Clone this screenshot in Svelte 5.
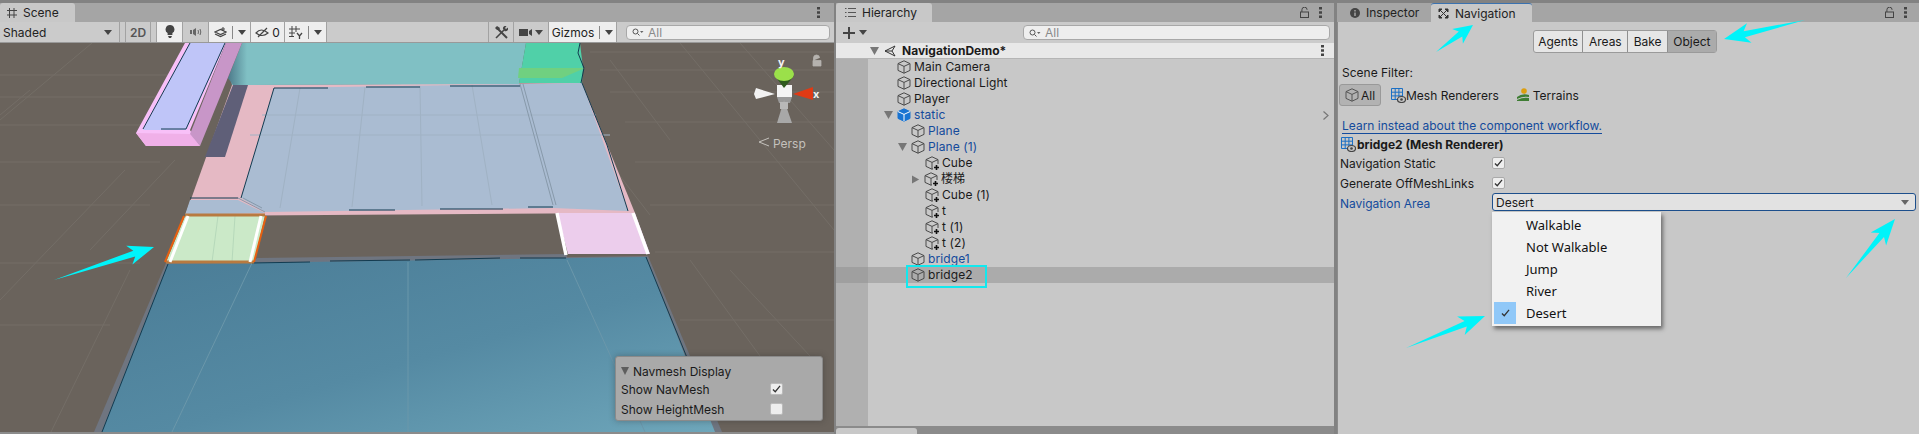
<script>
  // hierarchy rows, depth 0 starts right of the grey gutter
  const rows = [
    { name: "Main Camera", depth: 0 },
    { name: "Directional Light", depth: 0 },
    { name: "Player", depth: 0 },
    { name: "static", depth: 0, blue: true, open: true, solid: true, more: true },
    { name: "Plane", depth: 1, blue: true },
    { name: "Plane (1)", depth: 1, blue: true, open: true },
    { name: "Cube", depth: 2, prefab: true },
    { name: "楼梯", depth: 2, prefab: true, closed: true },
    { name: "Cube (1)", depth: 2, prefab: true },
    { name: "t", depth: 2, prefab: true },
    { name: "t (1)", depth: 2, prefab: true },
    { name: "t (2)", depth: 2, prefab: true },
    { name: "bridge1", depth: 1, blue: true },
    { name: "bridge2", depth: 1, selected: true }
  ];
  const menu = ["Walkable", "Not Walkable", "Jump", "River", "Desert"];
  const tabs = ["Agents", "Areas", "Bake", "Object"];

  function dart(x1, y1, x2, y2) {
    const dx = x2 - x1, dy = y2 - y1;
    const len = Math.hypot(dx, dy);
    const ux = dx / len, uy = dy / len;
    const px = -uy, py = ux;
    const head = Math.min(26, len * 0.42);
    const nx = x2 - ux * head * 0.8, ny = y2 - uy * head * 0.8;
    const bx = x2 - ux * head, by = y2 - uy * head;
    const w = Math.min(10, len * 0.2);
    const p = [
      [x1, y1],
      [nx + px * 3, ny + py * 3],
      [bx + px * w, by + py * w],
      [x2, y2],
      [bx - px * w, by - py * w],
      [nx - px * 3, ny - py * 3]
    ];
    return p.map((q) => q[0].toFixed(1) + "," + q[1].toFixed(1)).join(" ");
  }
  const arrows = [
    dart(54, 280, 154, 247),
    dart(1436, 52, 1473, 25),
    dart(1805, 20, 1724, 39),
    dart(1846, 278, 1895, 219),
    dart(1406, 348, 1485, 316)
  ];
</script>

{#snippet cube(color = "#4a4a4a", fill = "none")}
  <svg class="cube" viewBox="0 0 14 14" width="14" height="14">
    <path d="M7 .8 13 3.6V10.4L7 13.2 1 10.4V3.6Z" {fill} stroke={color} stroke-width="1" />
    <path d="M1 3.6 7 6.4 13 3.6M7 6.4V13.2" fill="none" stroke={fill === "none" ? color : "#fff"} stroke-width="1" />
  </svg>
{/snippet}

{#snippet prefab()}
  <svg class="cube pf" viewBox="0 0 15 15" width="15" height="15">
    <path d="M7 .8 13 3.6V10.4L7 13.2 1 10.4V3.6Z" fill="none" stroke="#4a4a4a" />
    <path d="M1 3.6 7 6.4 13 3.6M7 6.4V13.2" fill="none" stroke="#4a4a4a" />
    <rect x="8" y="8" width="7" height="7" fill="#c8c8c8" />
    <path d="M11.5 9v5M9 11.5h5" stroke="#111" stroke-width="1.6" />
  </svg>
{/snippet}

{#snippet meshIcon()}
  <svg viewBox="0 0 15 15" width="15" height="15">
    <path d="M.5.5h11v11H.5ZM4.2.5v11M7.9.5v11M.5 4.2h11M.5 7.9h11" fill="none" stroke="#1a6fc4" />
    <ellipse cx="10.5" cy="11.5" rx="4" ry="3" fill="#c8c8c8" stroke="#444" stroke-width="1.2" />
    <circle cx="10.5" cy="11.5" r="1.3" fill="#444" />
  </svg>
{/snippet}

{#snippet search()}
  <div class="search">
    <svg viewBox="0 0 12 8" width="12" height="8"><circle cx="3.5" cy="3.5" r="2.5" fill="none" stroke="#555" /><path d="M5.5 5.5 7.5 7.5" stroke="#555" /><path d="M8 3h3.5L9.7 5Z" fill="#666" /></svg>
    <span>All</span>
  </div>
{/snippet}

{#snippet caret()}
  <svg class="caret" viewBox="0 0 8 5" width="8" height="5"><path d="M0 0h8L4 5Z" /></svg>
{/snippet}

{#snippet dots()}
  <svg viewBox="0 0 3 11" width="3" height="11"><path d="M0 0h3v2.4H0ZM0 4.3h3v2.4H0ZM0 8.6h3V11H0Z" fill="#444" /></svg>
{/snippet}

{#snippet lock()}
  <svg viewBox="0 0 9 11" width="9" height="11"><path d="M1.9 5V2.8a2.6 2.6 0 0 1 5.2 0" fill="none" stroke="#444" /><rect x=".5" y="5" width="8" height="5.5" fill="none" stroke="#444" /></svg>
{/snippet}

{#snippet tick()}
  <svg viewBox="0 0 10 9" width="9" height="8"><path d="M1 5 3.6 7.6 9 1" fill="none" stroke="#333" stroke-width="1.4" /></svg>
{/snippet}

<div class="editor">
  <section class="panel scene">
    <div class="tabbar">
      <div class="tab scene-tab">
        <svg viewBox="0 0 10 10" width="10" height="10"><path d="M2.5 0v10M7 0v10M0 2.5h10M0 7h10" stroke="#444" /></svg>
        <span>Scene</span>
      </div>
      <div class="grow"></div>
      <div class="tab-menu">{@render dots()}</div>
    </div>
    <div class="toolbar">
      <div class="tool shaded"><span>Shaded</span>{@render caret()}</div>
      <div class="tool blank"></div>
      <div class="tool two-d">2D</div>
      <div class="tool blank"></div>
      <div class="tool on w25">
        <svg viewBox="0 0 10 14" width="10" height="14"><path d="M5 0a4.4 4.4 0 0 0-2.4 8.1V10h4.8V8.1A4.4 4.4 0 0 0 5 0ZM3 11h4L6 13H4Z" fill="#444" /></svg>
      </div>
      <div class="tool w25">
        <svg viewBox="0 0 12 10" width="12" height="10"><path d="M0 3h2v4H0ZM3 3 6 1v8L3 7Z" fill="#666" /><path d="M8 3q1 2 0 4M10 2q1.6 3 0 6" fill="none" stroke="#666" /></svg>
      </div>
      <div class="tool on w42">
        <svg viewBox="0 0 13 11" width="13" height="11"><path d="M1 7 6.500 9.500 12 7M1 5l5.500 2.500L12 5 6.500 2.500Z" fill="none" stroke="#444" stroke-width="1.2" /><path d="M9 0v4M7 2h4" stroke="#444" /></svg>
        <i class="sep"></i>{@render caret()}
      </div>
      <div class="tool on w34">
        <svg viewBox="0 0 14 11" width="14" height="11"><path d="M1 6q5-6 12 0-6 5-12 0ZM3 10 12 1" fill="none" stroke="#444" stroke-width="1.2" /></svg>
        <span>0</span>
      </div>
      <div class="tool on w42">
        <svg viewBox="0 0 14 13" width="14" height="13"><path d="M3 0v11M7 0v6M0 3h11M0 7h6M0 10.500h5" stroke="#444" fill="none" /><path d="M8 7l2.500 3L13 7M10.500 10v3" stroke="#444" stroke-width="1.300" fill="none" /></svg>
        <i class="sep"></i>{@render caret()}
      </div>
      <div class="grow"></div>
      <div class="tool w25 tools-btn">
        <svg viewBox="0 0 13 13" width="13" height="13"><path d="M3 3 12 12" stroke="#444" stroke-width="2" /><path d="M0 2 2 0l3 2-1 2-2 0Z" fill="#444" /><path d="M1 12 9 4" stroke="#444" stroke-width="1.600" /><path d="M8 3a2.600 2.600 0 0 1 3.500-3L10 2l1 1 2-1.400A2.600 2.600 0 0 1 9.500 5Z" fill="#444" /></svg>
      </div>
      <div class="tool w35">
        <svg viewBox="0 0 13 9" width="13" height="9"><path d="M0 1h9v7H0ZM10 3l3-2v7l-3-2Z" fill="#444" /></svg>
        {@render caret()}
      </div>
      <div class="tool on gizmos"><span>Gizmos</span><i class="sep"></i>{@render caret()}</div>
      <div class="scene-search">{@render search()}</div>
    </div>
    <div class="view">
      <svg class="canvas" viewBox="0 43 834 389" width="834" height="389">
        <defs>
          <linearGradient id="deep" x1="0" y1="0" x2="1" y2="1">
            <stop offset="0" stop-color="#4a7c96" />
            <stop offset="0.55" stop-color="#558aa3" />
            <stop offset="1" stop-color="#6ea6ba" />
          </linearGradient>
          <linearGradient id="shade" x1="0" y1="0" x2="1" y2="0">
            <stop offset="0" stop-color="#4d7a8a" />
            <stop offset="1" stop-color="#80c0c4" />
          </linearGradient>
        </defs>
        <rect x="0" y="43" width="834" height="389" fill="#6a635c" />
        <g stroke="#746e67" stroke-width="1" fill="none">
          <path d="M0 75H190M0 97H170M0 125H150M0 162H160M0 205H150M0 263H140M0 325H110M590 52H834M600 70H834M610 92H834M625 122H834M635 162H834M650 205H834M655 252H834M680 320H834" />
          <path d="M92 43 0 120M30 90 0 115M175 160 90 250M125 170 0 300M130 270 50 434M600 150 650 215M680 43 834 230M740 43 834 150M690 260 760 356M730 270 810 356M610 60 670 140" />
        </g>

        <polygon points="232,85 582,83 635,213 185,216" fill="#e5b9c4" />
        <polygon points="233,85 248,85 225,157 205,157" fill="#5f5f78" />
        <polygon points="246,43 526,43 519,84 232,85 230,75" fill="#80c0c4" />
        <polygon points="228,78 233,85 247,85 247,43 242,43" fill="url(#shade)" />

        <polygon points="185,43 226,43 190,130 200,146 146,146 136,133" fill="#f8c0f8" />
        <polygon points="190,43 225,43 186,130 143,130" fill="#bfc5f8" />
        <polygon points="136,133 190,134 200,146 146,146" fill="#f0b0e8" />
        <polygon points="190,134 226,43 242,43 200,146" fill="#c896c8" />
        <path d="M190 43 143 129M161 129H186L225 43" fill="none" stroke="#123b50" stroke-width="1" />

        <polygon points="526,43 580,43 583,68 582,83 519,83" fill="#50d0a8" />
        <polygon points="519,68 585,68 562,78 518,78" fill="#70d080" />
        <path d="M580 43 578 53 584 68 581 83" fill="none" stroke="#123b50" />

        <polygon points="274,88 520,84 582,83 628,211 553,208 265,212 241,198 257,145" fill="#aabcd2" />
        <polygon points="190,200 238,200 265,213 185,215" fill="#aabcd2" />
        <g stroke="#a0b2c4" fill="none">
          <path d="M300 88 280 208M365 87 352 207M420 86 422 206M472 85 492 205M250 135H610M262 115H596" />
        </g>
        <path d="M520 84 553 205M523 84 556 205M238 198 265 212M243 198 262 208" fill="none" stroke="#8799aa" />
        <path d="M274 88 257 145 241 198M274 88H328M366 87H420M450 86H520M582 83 607 145 628 211M190 198H238M349 210H395M440 209H503M528 207H553" fill="none" stroke="#123b50" />

        <polygon points="257,258 567,254 567,260 252,263" fill="#6f7580" />
        <polygon points="166,263 648,256 722,432 94,432" fill="#6f7580" />
        <polygon points="168,264 646,257 715,432 102,432" fill="url(#deep)" />
        <path d="M252 263 172 432M567 260 645 432M408 262V432" fill="none" stroke="#6b97aa" />
        <path d="M168 264 102 432M646 257 690 365M252 263 310 262M330 261 410 260M415 260 500 258M520 258 566 258" fill="none" stroke="#123b50" />

        <polygon points="185,216 265,216 254,262 166,262" fill="#cbe9c8" />
        <path d="M218 216 212 262M235 216 232 262" stroke="#b6d8ba" fill="none" />
        <path d="M185 215H265M166 262H254" stroke="#b87a40" stroke-width="3" fill="none" />
        <path d="M188 216 170 262M261 216 250 262" stroke="#fff" stroke-width="3" fill="none" />
        <path d="M184 216 165 262M266 216 254 262" stroke="#e86010" stroke-width="2" fill="none" />

        <polygon points="557,213 635,213 650,254 568,254" fill="#eccdec" />
        <path d="M557 213 566 255M633 213 648 254" stroke="#fff" stroke-width="3.500" fill="none" />

        <g>
          <polygon points="777,85 792,85 792,97 777,97" fill="#f4f4f4" />
          <polygon points="777,97 792,97 790,103 779,103" fill="#9a9a9a" />
          <polygon points="775,76 794,76 784,88" fill="#2f5a1e" />
          <ellipse cx="784" cy="74" rx="10" ry="7" fill="#9be04a" />
          <polygon points="793,94 813,87 813,100" fill="#e03a14" />
          <polygon points="775,94 756,88 754,94 756,99" fill="#f2f2f2" />
          <polygon points="784,100 792,123 777,123" fill="#a8a8a8" />
          <rect x="780" y="102" width="8" height="7" fill="#b8b8b8" />
        </g>
        <text x="778" y="66" class="axis">y</text>
        <text x="813" y="98" class="axis">x</text>
        <path d="M813.500 60.500V58a3 3 0 0 1 6 0M813 60.500h8V66h-8Z" fill="#b5b2ae" stroke="#b5b2ae" stroke-width=".8" />
        <path d="M769 138 759 142 769 146" fill="none" stroke="#c4c1bc" />
        <text x="773" y="148" class="persp">Persp</text>
      </svg>

      <div class="navmesh">
        <div class="nav-title"><svg viewBox="0 0 8 8" width="8" height="8"><path d="M0 0h8L4 8Z" fill="#5e5e5e" /></svg>Navmesh Display</div>
        <div class="nav-row"><span>Show NavMesh</span><span class="box nav-box">{@render tick()}</span></div>
        <div class="nav-row"><span>Show HeightMesh</span><span class="box nav-box"></span></div>
      </div>
    </div>
  </section>

  <section class="panel hierarchy">
    <div class="tabbar">
      <div class="tab hier-tab">
        <svg viewBox="0 0 11 9" width="11" height="9"><path d="M3 .5h8M3 4.500h8M3 8.500h8M0 .5h1.500M0 4.500h1.500M0 8.500h1.500" stroke="#555" /></svg>
        <span>Hierarchy</span>
      </div>
      <div class="grow"></div>
      <div class="tab-menu wide">{@render lock()}{@render dots()}</div>
    </div>
    <div class="toolbar hier-bar">
      <svg viewBox="0 0 12 12" width="12" height="12"><path d="M6 0v12M0 6h12" stroke="#444" stroke-width="2" /></svg>
      {@render caret()}
      <div class="grow"></div>
      <div class="hier-search">{@render search()}</div>
    </div>
    <div class="tree">
      <div class="scene-row">
        <svg class="tri" viewBox="0 0 9 8" width="9" height="8"><path d="M0 0h9L4.500 8Z" /></svg>
        <svg viewBox="0 0 12 12" width="12" height="12"><path d="M11 1 1 6l10 5M11 1 8 6l3 5M1 6h7" fill="none" stroke="#333" /></svg>
        <b>NavigationDemo*</b>
        <div class="grow"></div>
        <svg viewBox="0 0 3 11" width="3" height="11"><path d="M0 0h3v2.400H0ZM0 4.300h3v2.400H0ZM0 8.600h3V11H0Z" fill="#444" /></svg>
      </div>
      {#each rows as row}
        <div class="row" class:selected={row.selected} class:blue={row.blue} style="padding-left: {61 + row.depth * 14}px">
          {#if row.open}
            <svg class="tri-inline" viewBox="0 0 9 8" width="9" height="8"><path d="M0 0h9L4.500 8Z" /></svg>
          {:else if row.closed}
            <svg class="tri-inline" viewBox="0 0 9 9" width="8" height="9"><path d="M0 0 8 4.500 0 9Z" /></svg>
          {/if}
          {#if row.prefab}
            {@render prefab()}
          {:else if row.solid}
            {@render cube("#1a74d2", "#1a74d2")}
          {:else}
            {@render cube()}
          {/if}
          <span class="label">{row.name}</span>
          {#if row.more}
            <div class="grow"></div>
            <svg class="chev" viewBox="0 0 6 9" width="6" height="9"><path d="M.5.5 5 4.500.5 8.500" fill="none" stroke="#777" stroke-width="1.200" /></svg>
          {/if}
          {#if row.selected}<i class="mark"></i>{/if}
        </div>
      {/each}
    </div>
    <div class="bottom-tabs"><div class="bottom-tab"></div></div>
  </section>

  <section class="panel inspector">
    <div class="tabbar">
      <div class="tab insp-tab off">
        <svg viewBox="0 0 10 10" width="10" height="10"><circle cx="5" cy="5" r="5" fill="#444" /><path d="M5 2v1.400M5 4.400V8" stroke="#bbb" stroke-width="1.200" /></svg>
        <span>Inspector</span>
      </div>
      <div class="tab nav-tab">
        <svg viewBox="0 0 11 11" width="11" height="11"><path d="M1 1h3L1 4ZM10 1v3L7 1ZM1 10V7l3 3ZM10 10H7l3-3Z" fill="#333" stroke="#333" /><path d="M2 2 9 9M9 2 2 9" stroke="#333" /></svg>
        <span>Navigation</span>
      </div>
      <div class="grow"></div>
      <div class="tab-menu wide">{@render lock()}{@render dots()}</div>
    </div>
    <div class="body">
      <div class="segments">
        {#each tabs as t}
          <span class="seg" class:active={t === "Object"}>{t}</span>
        {/each}
      </div>
      <div class="filter-label">Scene Filter:</div>
      <div class="filters">
        <span class="all">{@render cube("#555")}All</span>
        <span class="mesh">{@render meshIcon()}Mesh Renderers</span>
        <span class="terrain">
          <svg viewBox="0 0 14 14" width="14" height="14"><circle cx="8" cy="3" r="2.800" fill="#dd9f10" /><path d="M1 9q5-4 12-2v2Q7 8 1 11ZM1 12q6-3 12-2v3H1Z" fill="#3f7d34" /></svg>
          Terrains
        </span>
      </div>
      <a class="link" href="#learn">Learn instead about the component workflow.</a>
      <div class="object-name">{@render meshIcon()}<b>bridge2 (Mesh Renderer)</b></div>
      <div class="prop"><span class="prop-label">Navigation Static</span><span class="box">{@render tick()}</span></div>
      <div class="prop"><span class="prop-label">Generate OffMeshLinks</span><span class="box">{@render tick()}</span></div>
      <div class="prop area">
        <span class="prop-label">Navigation Area</span>
        <div class="select-wrap">
          <div class="select"><span>Desert</span>{@render caret()}</div>
          <ul class="menu">
            {#each menu as item}
              <li class:current={item === "Desert"}>
                <span class="check">{#if item === "Desert"}{@render tick()}{/if}</span>
                {item}
              </li>
            {/each}
          </ul>
        </div>
      </div>
    </div>
  </section>

  <svg class="annot" viewBox="0 0 1919 434" width="1919" height="434">
    {#each arrows as pts}
      <polygon points={pts} fill="#00f4fa" />
    {/each}
  </svg>
</div>

<style>
  :global(body) {
    margin: 0;
    background: #7f7f7f;
  }
  .editor {
    position: relative;
    display: flex;
    width: 1919px;
    height: 434px;
    padding-top: 3px;
    box-sizing: border-box;
    background: #828282;
    overflow: hidden;
    font-family: Inter, "Noto Sans CJK SC", sans-serif;
    font-size: 12px;
    color: #1a1a1a;
  }
  .panel {
    display: flex;
    flex-direction: column;
    height: 431px;
    background: #c8c8c8;
  }
  .scene {
    width: 834px;
    margin-right: 2px;
    background: #8b8b8b;
  }
  .hierarchy {
    width: 498px;
    margin-right: 3px;
    background: #8b8b8b;
  }
  .inspector {
    width: 582px;
  }
  .grow {
    flex: 1;
  }
  .tabbar {
    display: flex;
    align-items: stretch;
    flex: none;
    height: 19px;
    background: #a5a5a5;
  }
  .tab {
    display: flex;
    align-items: center;
    gap: 6px;
    box-sizing: border-box;
    background: #c8c8c8;
    border-radius: 3px 3px 0 0;
    color: #222;
  }
  .scene-tab {
    width: 75px;
    padding-left: 7px;
  }
  .hier-tab {
    width: 96px;
    padding-left: 9px;
  }
  .insp-tab {
    width: 94px;
    padding-left: 13px;
  }
  .insp-tab.off {
    background: transparent;
  }
  .nav-tab {
    width: 101px;
    padding-left: 7px;
    border-top: 1px solid #3a72b0;
  }
  .tab-menu {
    display: flex;
    align-items: center;
    padding-right: 14px;
  }
  .tab-menu.wide {
    gap: 10px;
    padding-right: 12px;
  }
  .toolbar {
    display: flex;
    align-items: center;
    flex: none;
    height: 21px;
    box-sizing: border-box;
    background: #cbcbcb;
    border-bottom: 1px solid #999;
  }
  .tool {
    display: flex;
    align-items: center;
    justify-content: center;
    gap: 3px;
    height: 20px;
    box-sizing: border-box;
    border-right: 1px solid #a2a2a2;
    color: #222;
  }
  .tool.on {
    background: #eeeeee;
  }
  .shaded {
    justify-content: space-between;
    width: 120px;
    padding: 0 7px 0 3px;
  }
  .blank {
    width: 6px;
  }
  .two-d {
    width: 25px;
    font-weight: 600;
    color: #555;
  }
  .w25 {
    width: 26px;
  }
  .w35 {
    width: 35px;
  }
  .w34 {
    width: 34px;
  }
  .w42 {
    width: 42px;
  }
  .tools-btn {
    border-left: 1px solid #a2a2a2;
  }
  .gizmos {
    width: 68px;
  }
  .sep {
    width: 1px;
    height: 13px;
    margin: 0 2px;
    background: #888;
  }
  .caret {
    flex: none;
    fill: #444;
  }
  .search {
    display: flex;
    align-items: center;
    gap: 4px;
    height: 15px;
    padding-left: 5px;
    box-sizing: border-box;
    background: #eeeeee;
    border: 1px solid #a8a8a8;
    border-radius: 4px;
    color: #8a8a8a;
  }
  .scene-search {
    width: 204px;
    margin: 0 4px 0 9px;
  }
  .hier-bar {
    padding-left: 7px;
    gap: 4px;
    border-bottom: none;
    height: 21px;
  }
  .hier-search {
    width: 307px;
    margin-right: 4px;
  }
  .view {
    position: relative;
    flex: none;
    height: 389px;
    overflow: hidden;
  }
  .canvas {
    display: block;
  }
  .axis {
    fill: #f4f4f4;
    font-size: 11px;
    font-weight: 700;
  }
  .persp {
    fill: #c4c1bc;
    font-size: 12px;
  }
  .navmesh {
    position: absolute;
    left: 615px;
    top: 313px;
    width: 208px;
    height: 65px;
    box-sizing: border-box;
    padding: 6px 0 0 5px;
    background: #a9a9a9;
    border: 1px solid #8a8a8a;
    border-radius: 3px;
    box-shadow: 0 0 6px rgba(40, 40, 40, 0.35);
  }
  .nav-title {
    display: flex;
    align-items: center;
    gap: 4px;
    height: 16px;
  }
  .nav-row {
    display: flex;
    justify-content: space-between;
    align-items: center;
    height: 20px;
    padding-right: 39px;
  }
  .box {
    display: flex;
    align-items: center;
    justify-content: center;
    width: 13px;
    height: 12px;
    background: #eeeeee;
    border: 1px solid #aaa;
    border-radius: 2px;
    box-sizing: border-box;
  }
  .nav-box {
    border-color: #bbb;
  }
  .tree {
    flex: none;
    height: 383px;
    background: linear-gradient(to right, #b0b0b0 32px, #c8c8c8 32px);
  }
  .scene-row {
    display: flex;
    align-items: center;
    gap: 3px;
    height: 16px;
    box-sizing: border-box;
    padding: 0 10px 0 34px;
    background: #e8e8e8;
    border-bottom: 1px solid #b5b5b5;
  }
  .scene-row b {
    margin-left: 3px;
    font-weight: 700;
  }
  .tri {
    fill: #777;
    margin-right: 2px;
  }
  .row {
    position: relative;
    display: flex;
    align-items: center;
    height: 16px;
    padding-right: 5px;
  }
  .row .label {
    margin-left: 3px;
    line-height: 16px;
    letter-spacing: 0.1px;
  }
  .row.blue .label {
    color: #144b9c;
  }
  .row.selected {
    background: linear-gradient(to right, #9f9f9f 32px, #ababab 32px);
  }
  .tri-inline {
    flex: none;
    margin-left: -13px;
    margin-right: 4px;
    fill: #777;
  }
  .cube {
    flex: none;
    display: block;
  }
  .cube.pf {
    margin-right: -1px;
  }
  .mark {
    position: absolute;
    left: 70px;
    top: -2px;
    width: 81px;
    height: 23px;
    box-sizing: border-box;
    border: 2px solid #12e8ee;
  }
  .bottom-tabs {
    flex: 1;
    padding-top: 2px;
  }
  .bottom-tab {
    width: 81px;
    height: 8px;
    background: #c8c8c8;
    border-radius: 3px 3px 0 0;
  }
  .body {
    position: relative;
    flex: 1;
    padding: 8px 0 0 2px;
    border-left: 1px solid #8b8b8b;
  }
  .segments {
    display: flex;
    width: 184px;
    height: 23px;
    margin-left: 193px;
    box-sizing: border-box;
    background: #e6e6e6;
    border: 1px solid #9a9a9a;
    border-radius: 3px;
  }
  .seg {
    display: flex;
    align-items: center;
    justify-content: center;
    height: 100%;
    border-right: 1px solid #8f8f8f;
  }
  .seg:nth-child(1) { width: 49px; }
  .seg:nth-child(2) { width: 45px; }
  .seg:nth-child(3) { width: 39px; }
  .seg:nth-child(4) { width: 49px; border-right: none; }
  .seg.active {
    background: #ababab;
  }
  .filter-label {
    margin: 12px 0 0 2px;
    height: 16px;
    line-height: 16px;
  }
  .filters {
    display: flex;
    align-items: center;
    height: 22px;
    margin-top: 3px;
  }
  .all {
    display: flex;
    align-items: center;
    justify-content: center;
    gap: 2px;
    width: 42px;
    height: 22px;
    margin-left: -1px;
    box-sizing: border-box;
    background: #b2b2b2;
    border: 1px solid #999;
    border-radius: 3px;
  }
  .mesh {
    display: flex;
    align-items: center;
    margin-left: 10px;
  }
  .terrain {
    display: flex;
    align-items: center;
    gap: 3px;
    margin-left: 17px;
  }
  .link {
    display: inline-block;
    margin: 13px 0 0 2px;
    color: #144b9c;
    line-height: 14px;
    text-decoration: none;
    border-bottom: 1px solid #144b9c;
  }
  .object-name {
    display: flex;
    align-items: center;
    gap: 1px;
    height: 16px;
    margin: 2px 0 1px 1px;
  }
  .object-name b {
    font-weight: 700;
  }
  .prop {
    display: flex;
    align-items: center;
    height: 20px;
  }
  .prop-label {
    width: 152px;
    flex: none;
  }
  .area .prop-label {
    color: #144b9c;
  }
  .select-wrap {
    position: relative;
    align-self: flex-start;
    width: 424px;
    flex: none;
  }
  .select {
    display: flex;
    align-items: center;
    justify-content: space-between;
    height: 18px;
    padding: 0 6px 0 3px;
    box-sizing: border-box;
    background: #e2e2e2;
    border: 1px solid #1d4f8c;
    border-radius: 3px;
  }
  .select .caret {
    fill: #666;
  }
  .menu {
    position: absolute;
    top: 19px;
    left: 0;
    width: 169px;
    margin: 0;
    padding: 2px;
    box-sizing: border-box;
    list-style: none;
    background: #f1f1f1;
    box-shadow: 2px 3px 4px rgba(30, 30, 30, 0.55);
    font-family: "Noto Sans", Inter, sans-serif;
    font-size: 13px;
    color: #111;
  }
  .menu li {
    display: flex;
    align-items: center;
    gap: 10px;
    height: 22px;
  }
  .check {
    display: flex;
    align-items: center;
    justify-content: center;
    width: 22px;
    height: 22px;
  }
  .current .check {
    background: #90c8f8;
  }
  .annot {
    position: absolute;
    left: 0;
    top: 0;
    pointer-events: none;
  }
</style>
